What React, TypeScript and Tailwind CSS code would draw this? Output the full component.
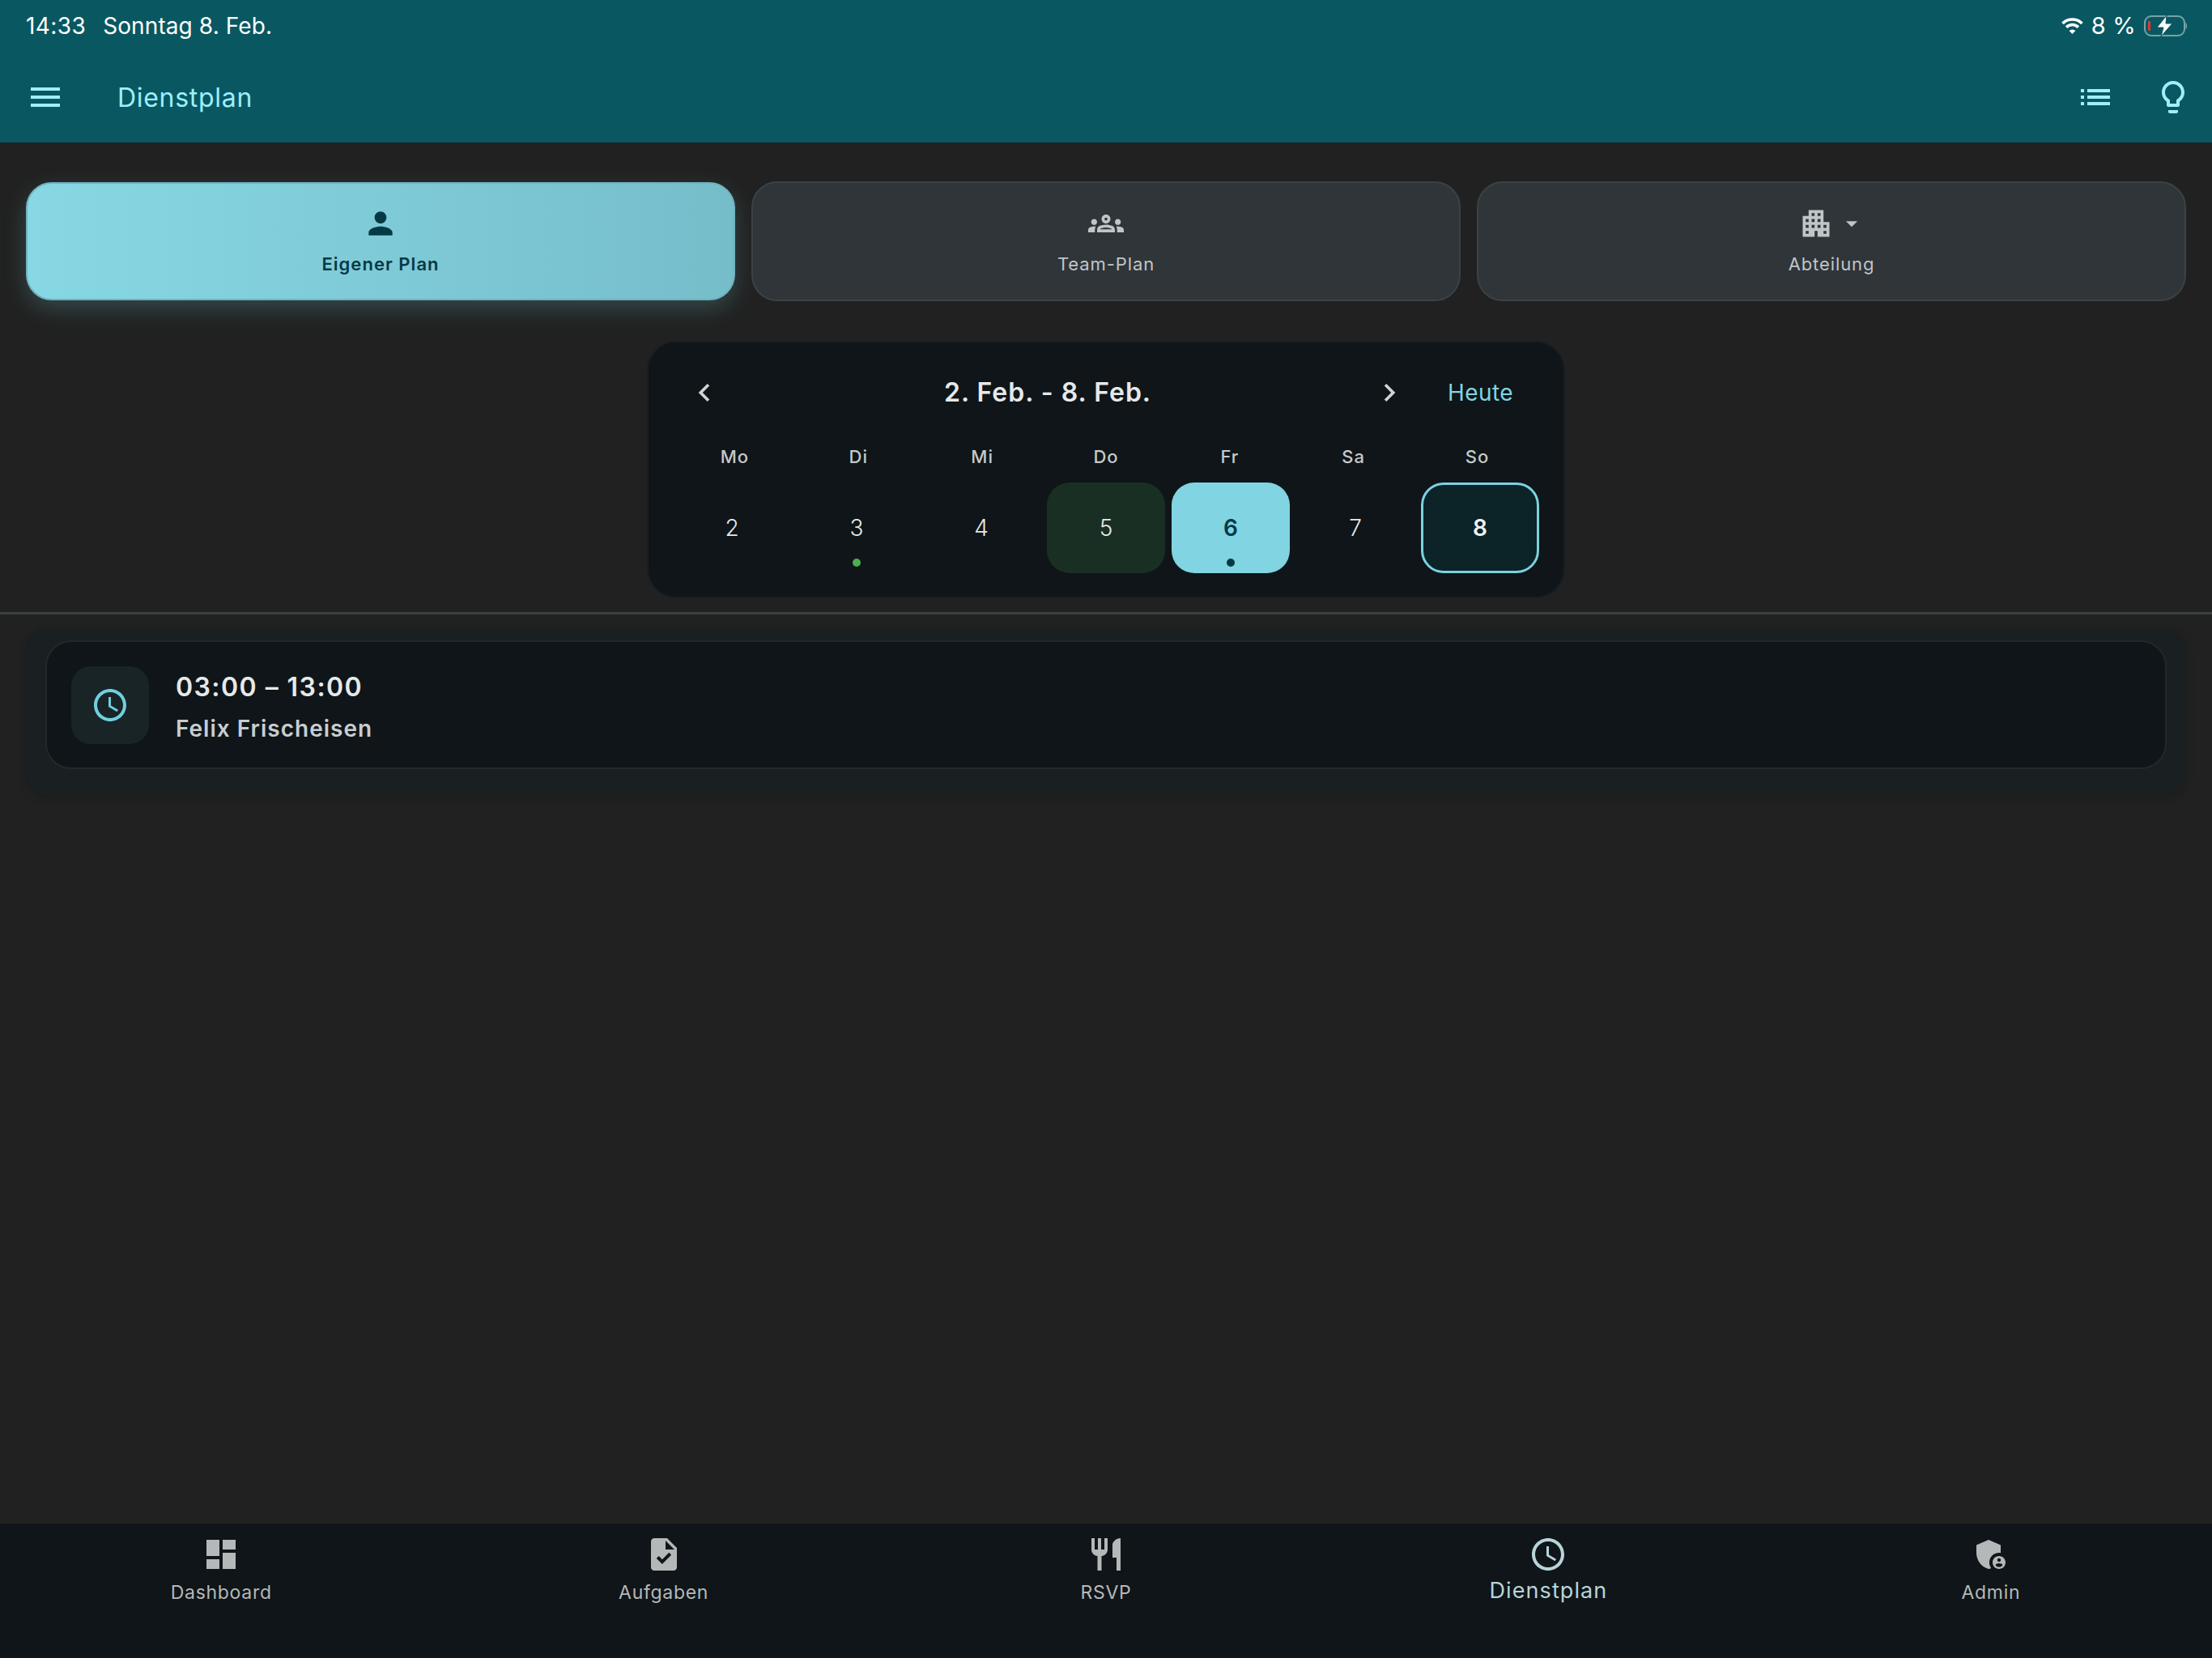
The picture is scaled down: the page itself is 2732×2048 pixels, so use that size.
import React from "react";
import {
  MdMenu, MdList, MdLightbulbOutline, MdPerson, MdOutlineGroups, MdApartment, MdArrowDropDown,
  MdChevronLeft, MdChevronRight, MdAccessTime, MdDashboard, MdTask, MdRestaurant, MdAdminPanelSettings,
} from "react-icons/md";

const font = { fontFamily: "Inter, 'Liberation Sans', sans-serif" };

function Wifi() {
  return (
    <svg width="29" height="20" viewBox="0 0 29 20" fill="none">
      <path d="M2.500 7A17 17 0 0 1 26.500 7" stroke="#fff" strokeWidth="3.600" />
      <path d="M7.100 11.600A10.500 10.500 0 0 1 21.900 11.600" stroke="#fff" strokeWidth="3.600" />
      <path d="M14.500 20L10.600 16.100A5.500 5.500 0 0 1 18.400 16.100z" fill="#fff" />
    </svg>
  );
}

function Battery() {
  return (
    <svg width="54" height="26" viewBox="0 0 54 26" fill="none">
      <rect x="1" y="1" width="49" height="24" rx="8" stroke="#ffffff" strokeOpacity="0.45" strokeWidth="2" />
      <rect x="5" y="7" width="3" height="12" rx="1" fill="#e5342f" />
      <path d="M51.500 9c2 1 2 7 0 8z" fill="#ffffff" fillOpacity="0.5" />
      <path d="M28 0L16 15H24L21 26L35 10H27z" fill="#fff" stroke="#095861" strokeWidth="1" />
    </svg>
  );
}

function Tab({ label, active, children }: { label: string; active?: boolean; children: React.ReactNode }) {
  return (
    <div
      className={
        active
          ? "flex-1 h-[146px] mt-px flex flex-col items-center rounded-[32px] border-2 border-[#6fb3bf] bg-gradient-to-r from-[#87d8e4] to-[#76bdca] text-[#053a45] shadow-[0_10px_28px_rgba(129,212,225,0.22)]"
          : "flex-1 h-[148px] flex flex-col items-center rounded-[32px] border-2 border-[#3b4245] bg-[#30353a] text-[#c0c5c7]"
      }
    >
      <div className={active ? "h-[44px] mt-[27px] flex items-center" : "h-[44px] mt-[28px] flex items-center"}>{children}</div>
      <div className={active ? "mt-[13px] text-[22px] leading-[30px] font-semibold tracking-[1.05px]" : "mt-[13px] text-[22px] leading-[30px] font-normal tracking-[0.9px]"}>
        {label}
      </div>
    </div>
  );
}

function Day({ n, variant, dot }: { n: number; variant?: "green" | "active" | "today"; dot?: string }) {
  const base = "relative h-[112px] flex items-center justify-center rounded-[28px] text-[28px] ";
  const v =
    variant === "green"
      ? "bg-[#1a2f23] text-[#e6e9ea] font-light"
      : variant === "active"
      ? "bg-[#81d4e1] text-[#053a45] font-semibold"
      : variant === "today"
      ? "bg-[#0c2328] border-[3px] border-[#7ad3e0] text-[#eef1f2] font-semibold"
      : "text-[#e6e9ea] font-light";
  return (
    <div className={base + v}>
      {n}
      {dot === "green" && <span className="absolute bottom-[8px] left-1/2 -translate-x-1/2 w-[10px] h-[10px] rounded-full bg-[#4caf50]" />}
      {dot === "dark" && <span className="absolute bottom-[8px] left-1/2 -translate-x-1/2 w-[10px] h-[10px] rounded-full bg-[#053a45]" />}
    </div>
  );
}

function NavItem({ label, active, children }: { label: string; active?: boolean; children: React.ReactNode }) {
  return (
    <div className={active ? "flex-1 flex flex-col items-center text-[#b8d3d9]" : "flex-1 flex flex-col items-center text-[#b5b8b8]"}>
      <div className="mt-[14px] h-[48px] flex items-center">{children}</div>
      <div className={active ? "mt-[3px] text-[27px] leading-[36px] tracking-[1.1px]" : "mt-[7px] text-[23px] leading-[32px] tracking-[0.7px]"}>
        {label}
      </div>
    </div>
  );
}

export default function App() {
  const week = ["Mo", "Di", "Mi", "Do", "Fr", "Sa", "So"];
  return (
    <div className="w-[2732px] h-[2048px] flex flex-col bg-[#212121] overflow-hidden" style={font}>
      <header className="h-[176px] bg-[#095861] flex flex-col shrink-0">
        <div className="h-[64px] flex items-center justify-between pl-[32px] pr-[30px] text-white text-[28px] tracking-[0.1px]">
          <div className="flex gap-[21px]">
            <span className="tracking-[0.4px]">14:33</span>
            <span>Sonntag 8. Feb.</span>
          </div>
          <div className="flex items-center">
            <Wifi />
            <span className="ml-[9px] mr-[10px] tracking-[0.2px] text-[29px]">8 %</span>
            <Battery />
          </div>
        </div>
        <div className="flex-1 flex items-center text-[#9eeffd]">
          <MdMenu size={48} className="ml-[32px]" />
          <span className="ml-[65px] pt-[2px] text-[32px] tracking-[0.7px]">Dienstplan</span>
          <MdList size={48} className="ml-auto" />
          <MdLightbulbOutline size={48} className="ml-[48px] mr-[24px]" />
        </div>
      </header>

      <main className="flex-1 flex flex-col">
        <div className="flex gap-[20px] px-[32px] pt-[48px] items-start">
          <Tab label="Eigener Plan" active><MdPerson size={44} /></Tab>
          <Tab label="Team-Plan"><MdOutlineGroups size={44} /></Tab>
          <Tab label="Abteilung">
            <MdApartment size={44} />
            <MdArrowDropDown size={34} className="ml-[5px]" />
          </Tab>
        </div>

        <section className="mx-auto mt-[49px] w-[1134px] h-[318px] rounded-[36px] bg-[#0f1518] border-2 border-[#181e21] px-[30px] pt-[32px]">
          <div className="h-[60px] flex items-center text-[#d0d4d5]">
            <MdChevronLeft size={44} className="ml-[17px]" />
            <span className="ml-[274px] text-[32px] font-semibold text-[#e6e9ea] tracking-[1px]">2. Feb. - 8. Feb.</span>
            <MdChevronRight size={44} className="ml-[272px]" />
            <span className="ml-[50px] text-[28px] text-[#7fd6e2] tracking-[0.4px]">Heute</span>
          </div>
          <div className="grid grid-cols-7 mt-[34px] text-[#c5c9ca] text-[22px] font-medium tracking-[1px] text-center leading-[30px]">
            {week.map((d) => <div key={d}>{d}</div>)}
          </div>
          <div className="grid grid-cols-7 gap-[8px] mt-[17px]">
            <Day n={2} />
            <Day n={3} dot="green" />
            <Day n={4} />
            <Day n={5} variant="green" />
            <Day n={6} variant="active" dot="dark" />
            <Day n={7} />
            <Day n={8} variant="today" />
          </div>
        </section>

        <div className="h-[3px] mt-[17px] bg-[#3a4144]" />

        <section className="mx-[32px] mt-[16px] h-[208px] rounded-[28px] bg-[#1a1f21] px-[24px] pt-[16px] shadow-[0_4px_12px_rgba(0,0,0,0.15)]">
          <div className="h-[159px] rounded-[32px] border-2 border-[#22292c] bg-[#0f1518] flex items-center pl-[30px]">
            <div className="w-[96px] h-[96px] rounded-[24px] bg-[#192426] flex items-center justify-center text-[#6fd0de]">
              <MdAccessTime size={48} />
            </div>
            <div className="ml-[33px] pt-[6px] flex flex-col">
              <span className="text-[32px] leading-[40px] font-semibold text-[#e6e9ea] tracking-[1.45px]">03:00 – 13:00</span>
              <span className="mt-[13px] text-[28px] leading-[36px] font-semibold text-[#c8cdcf] tracking-[1px]">Felix Frischeisen</span>
            </div>
          </div>
        </section>
      </main>

      <nav className="h-[166px] shrink-0 bg-[#0f1518] flex">
        <NavItem label="Dashboard"><MdDashboard size={48} /></NavItem>
        <NavItem label="Aufgaben"><MdTask size={48} /></NavItem>
        <NavItem label="RSVP"><MdRestaurant size={48} /></NavItem>
        <NavItem label="Dienstplan" active><MdAccessTime size={48} /></NavItem>
        <NavItem label="Admin"><MdAdminPanelSettings size={48} /></NavItem>
      </nav>
    </div>
  );
}
